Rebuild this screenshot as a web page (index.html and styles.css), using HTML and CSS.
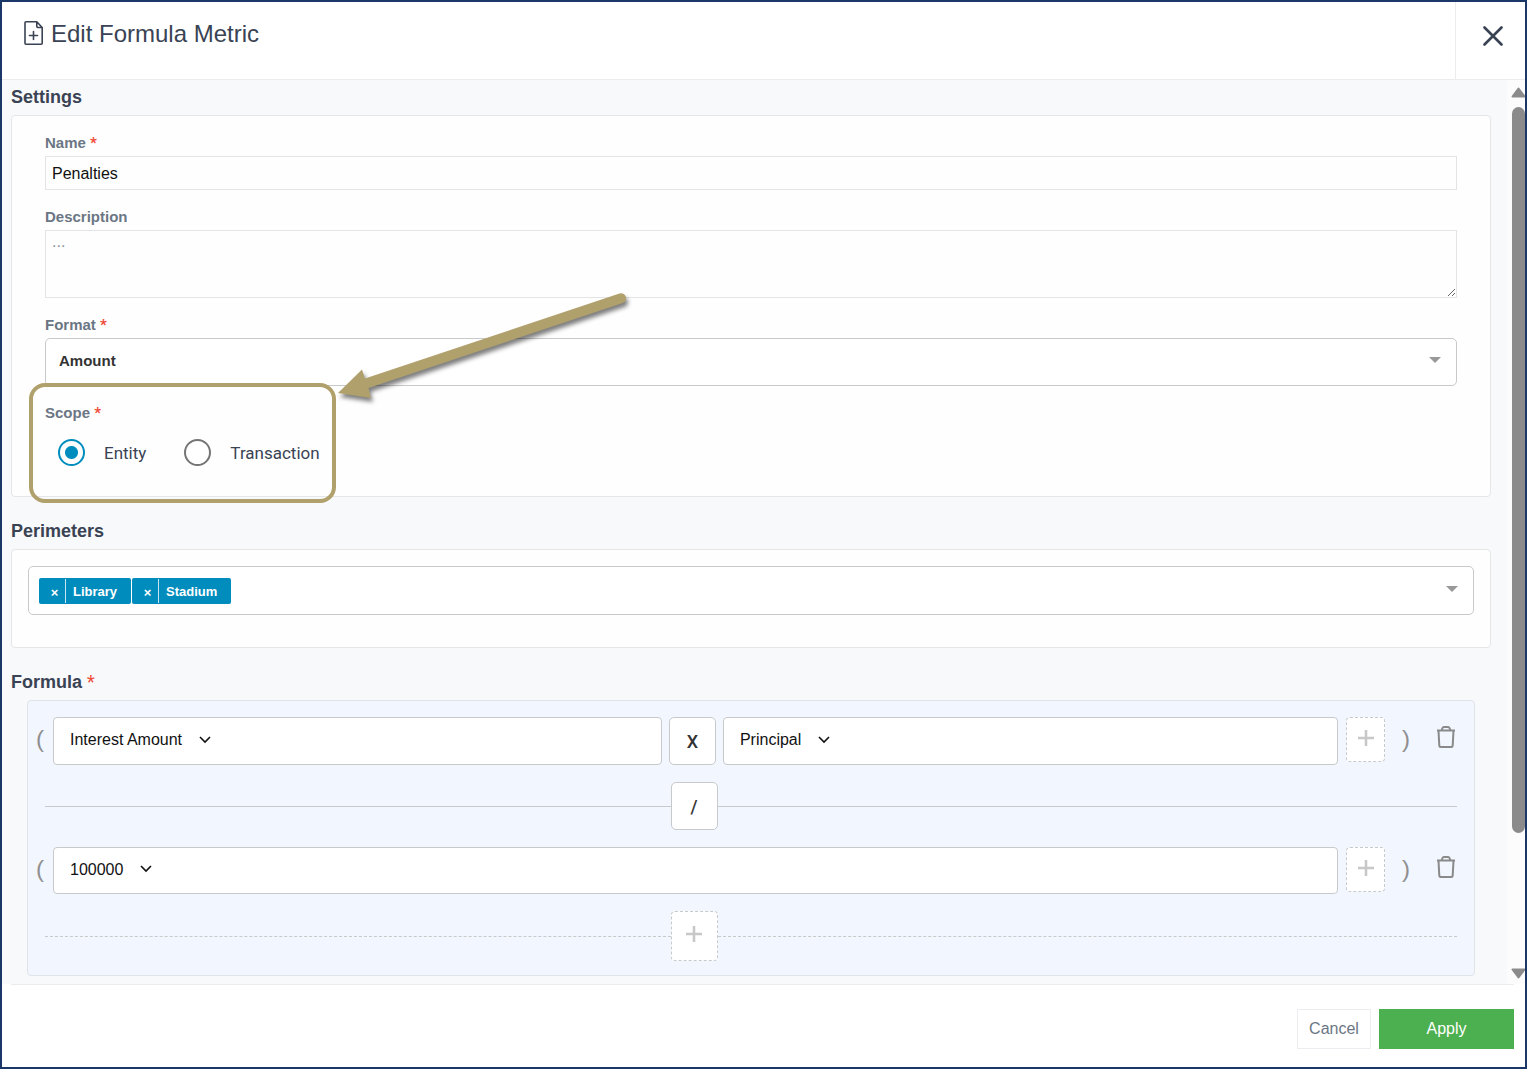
FILE: index.html
```
<!DOCTYPE html>
<html lang="en">
<head>
    <meta charset="UTF-8">
    <meta name="viewport" content="width=device-width, initial-scale=1">
    <title>Edit Formula Metric</title>
    <link rel="stylesheet" href="styles.css">
</head>
<body>
    <svg class="sprite" aria-hidden="true">
        <symbol id="icon-chevron" viewBox="0 0 12 8">
            <path d="M1 1l5 5 5-5" fill="none" stroke="currentColor" stroke-width="1.6"/>
        </symbol>
        <symbol id="icon-caret" viewBox="0 0 12 6">
            <path d="M0 0h12L6 6z" fill="currentColor"/>
        </symbol>
        <symbol id="icon-plus" viewBox="0 0 18 18">
            <path d="M9 1v16M1 9h16" fill="none" stroke="currentColor" stroke-width="2.6"/>
        </symbol>
        <symbol id="icon-trash" viewBox="0 0 20 22">
            <path d="M1 4.5h18M2.500 4.500l.8 15.200q.1 1.300 1.300 1.300h10.800q1.200 0 1.300-1.300L17.500 4.500M5.500 4.500l1-2.500q.4-1 1.400-1h4.200q1 0 1.400 1l1 2.500" fill="none" stroke="currentColor" stroke-width="2" stroke-linejoin="round"/>
        </symbol>
        <symbol id="icon-scroll" viewBox="0 0 15 11">
            <path d="M7.500 1.500L13.500 9.500H1.500z" fill="currentColor" stroke="currentColor" stroke-width="2" stroke-linejoin="round"/>
        </symbol>
    </svg>

    <div class="dialog" role="dialog" aria-labelledby="dialogTitle">
        <div class="header">
            <svg class="file-icon" viewBox="0 0 20 24" aria-hidden="true">
                <path d="M2 .8h10.800L18.200 6.500v15.700q0 1-1 1H2q-1 0-1-1V1.800q0-1 1-1zM12.800 1v4.500q0 1 1 1h4.400M9.500 10.500v8M5.500 14.500h8" fill="none" stroke="currentColor" stroke-width="1.600" stroke-linecap="round" stroke-linejoin="round"/>
            </svg>
            <h1 id="dialogTitle">Edit Formula Metric</h1>
            <button type="button" class="close" aria-label="Close">
                <svg viewBox="0 0 20 20"><path d="M1.500 1.500l17 17M18.500 1.500l-17 17" fill="none" stroke="currentColor" stroke-width="2.600" stroke-linecap="round"/></svg>
            </button>
        </div>

        <div class="body">
            <form class="content" id="metricForm">
                <h2>Settings</h2>
                <div class="card settings">
                    <div class="field">
                        <label for="name">Name <span class="required">*</span></label>
                        <input type="text" id="name" class="text" value="Penalties">
                    </div>
                    <div class="field">
                        <label for="description">Description</label>
                        <textarea id="description" class="text" placeholder="..."></textarea>
                    </div>
                    <div class="field">
                        <label for="format">Format <span class="required">*</span></label>
                        <div class="select-box">
                            <select id="format">
                                <option>Amount</option>
                            </select>
                            <svg class="caret"><use href="#icon-caret"/></svg>
                        </div>
                    </div>
                    <div class="field scope">
                        <fieldset>
                            <legend>Scope <span class="required">*</span></legend>
                            <div class="radios">
                                <label class="radio"><input type="radio" name="scope" checked>Entity</label>
                                <label class="radio"><input type="radio" name="scope">Transaction</label>
                            </div>
                        </fieldset>
                        <div class="highlight"></div>
                        <svg class="pointer" viewBox="330 285 310 125" aria-hidden="true">
                            <path d="M338 393L362 369.500L365 378.500L619.500 293.500A5 5 0 0 1 622.700 303L368.500 388L371 398z" fill="#b0a06b"/>
                        </svg>
                    </div>
                </div>

                <h2>Perimeters</h2>
                <div class="card perimeters">
                    <div class="tag-box">
                        <span class="tag"><button type="button" aria-label="Remove Library">×</button><span>Library</span></span>
                        <span class="tag"><button type="button" aria-label="Remove Stadium">×</button><span>Stadium</span></span>
                        <input type="text" class="tag-input" aria-label="Perimeters">
                        <svg class="caret"><use href="#icon-caret"/></svg>
                    </div>
                </div>

                <h2>Formula <span class="required">*</span></h2>
                <div class="formula">
                    <div class="row">
                        <span class="paren">(</span>
                        <div class="terms product">
                            <div class="term">
                                <select aria-label="First term"><option>Interest Amount</option></select>
                                <svg class="chevron"><use href="#icon-chevron"/></svg>
                            </div>
                            <button type="button" class="operator">X</button>
                            <div class="term">
                                <select aria-label="Second term"><option>Principal</option></select>
                                <svg class="chevron"><use href="#icon-chevron"/></svg>
                            </div>
                        </div>
                        <button type="button" class="add" aria-label="Add term"><svg><use href="#icon-plus"/></svg></button>
                        <span class="paren close-paren">)</span>
                        <button type="button" class="trash" aria-label="Delete row"><svg><use href="#icon-trash"/></svg></button>
                    </div>
                    <div class="divider">
                        <button type="button" class="operator">/</button>
                    </div>
                    <div class="row">
                        <span class="paren">(</span>
                        <div class="terms">
                            <div class="term">
                                <select aria-label="Divisor"><option>100000</option></select>
                                <svg class="chevron"><use href="#icon-chevron"/></svg>
                            </div>
                        </div>
                        <button type="button" class="add" aria-label="Add term"><svg><use href="#icon-plus"/></svg></button>
                        <span class="paren close-paren">)</span>
                        <button type="button" class="trash" aria-label="Delete row"><svg><use href="#icon-trash"/></svg></button>
                    </div>
                    <div class="divider dashed">
                        <button type="button" class="add" aria-label="Add row"><svg><use href="#icon-plus"/></svg></button>
                    </div>
                </div>
            </form>
            <div class="scrollbar" aria-hidden="true">
                <svg><use href="#icon-scroll"/></svg>
                <div class="track"><div class="thumb"></div></div>
                <svg class="down"><use href="#icon-scroll"/></svg>
            </div>
        </div>

        <div class="footer">
            <button type="button" class="cancel">Cancel</button>
            <button type="submit" form="metricForm" class="apply">Apply</button>
        </div>
    </div>
</body>
</html>
```
FILE: styles.css
```
* {
    box-sizing: border-box;
}
body {
    margin: 0;
    font-family: "Liberation Sans", Arial, sans-serif;
    font-size: 16px;
    color: #3a4354;
}
button, input, select, textarea {
    font: inherit;
    color: inherit;
    margin: 0;
}
button {
    padding: 0;
    cursor: pointer;
}
svg {
    display: block;
    flex: none;
}
.sprite {
    display: none;
}
.dialog {
    display: flex;
    flex-direction: column;
    min-height: 100vh;
    border: 2px solid #1b3768;
    background: #fff;
}

/* header */
.header {
    display: flex;
    height: 78px;
    padding-left: 22px;
    border-bottom: 1px solid #ebecee;
}
.file-icon {
    width: 20px;
    height: 24px;
    margin: 19px 7px 0 0;
}
h1 {
    flex: 1;
    margin: 0;
    font-size: 24px;
    line-height: 64px;
    font-weight: normal;
}
.close {
    display: flex;
    justify-content: center;
    width: 70px;
    padding: 24px 0 0 4px;
    border: none;
    border-left: 1px solid #ebecee;
    background: none;
}
.close svg {
    width: 20px;
    height: 20px;
}

/* body */
.body {
    display: flex;
    flex: 1;
    background: #f8f9fb;
}
.content {
    flex: 1;
    min-width: 0;
    padding: 0 16px 8px 9px;
}
h2 {
    margin: 0;
    font-size: 18px;
    line-height: 35px;
}
.required {
    font-family: Roboto, sans-serif;
    line-height: 1;
    color: #f04b37;
}
h2 .required {
    font-weight: normal;
}
.card {
    margin-bottom: 17px;
    border: 1px solid #e4e6e8;
    border-radius: 4px;
    background: #fefefe;
}
.settings {
    padding: 14px 33px 30px;
}
.field {
    display: flex;
    flex-direction: column;
    margin-bottom: 14px;
}
.field > label, legend {
    padding: 0;
    font-size: 15px;
    line-height: 26px;
    font-weight: bold;
    color: #6b7684;
}
.text {
    width: 100%;
    height: 34px;
    padding: 2px 6px 0;
    border: 1px solid #e2e4e6;
    background: #fefefe;
    color: #111;
    outline: none;
}
textarea.text {
    height: 68px;
    padding: 2px 6px;
}
textarea::placeholder {
    color: #8a94a0;
}
.select-box, .tag-box {
    display: flex;
    align-items: center;
    height: 48px;
    border: 1px solid #c8c9cb;
    border-radius: 5px;
    background: #fff;
}
.select-box {
    position: relative;
}
select {
    appearance: none;
    border: none;
    background: none;
    outline: none;
}
.select-box select {
    width: 100%;
    height: 100%;
    padding: 0 40px 4px 13px;
    font-size: 15px;
    font-weight: bold;
    color: #333;
}
.caret {
    width: 12px;
    height: 6px;
    margin: 0 15px 4px 0;
    color: #999;
}
.select-box .caret {
    position: absolute;
    right: 0;
    pointer-events: none;
}
.scope {
    position: relative;
    margin: 0;
}
fieldset {
    min-width: 0;
    margin: 0;
    padding: 0;
    border: none;
}
.radios {
    display: flex;
    gap: 38px;
    padding: 13px 13px 0;
}
.radio {
    display: flex;
    align-items: center;
    gap: 19px;
    font-family: Roboto, sans-serif;
    font-size: 17px;
}
.radio input {
    appearance: none;
    width: 27px;
    height: 27px;
    border: 2px solid #757575;
    border-radius: 50%;
    background: #fff;
}
.radio input:checked {
    border-color: #008dbd;
    background: radial-gradient(circle, #008dbd 6px, #fff 7px);
}
.highlight {
    position: absolute;
    top: -17px;
    left: -16px;
    width: 307px;
    height: 120px;
    border: 4px solid #b0a06b;
    border-radius: 16px;
    pointer-events: none;
}
.pointer {
    position: absolute;
    top: -115px;
    left: 285px;
    width: 310px;
    height: 125px;
    filter: drop-shadow(2px 4px 2px rgba(0, 0, 0, 0.5));
    pointer-events: none;
}

/* perimeters */
.perimeters {
    padding: 16px 16px 32px;
}
.tag-box {
    gap: 1px;
    height: 49px;
    padding-left: 10px;
}
.tag {
    display: flex;
    align-items: center;
    height: 26px;
    border-radius: 2px;
    background: #008dbd;
    color: #fff;
    font-size: 13px;
    line-height: 24px;
    font-weight: bold;
}
.tag button {
    width: 27px;
    height: 24px;
    padding: 2px 0 0 5px;
    border: none;
    border-right: 1px solid #c5e6f2;
    background: none;
}
.tag span {
    padding: 2px 14px 0 7px;
}
.tag-input {
    flex: 1;
    border: none;
    background: none;
    outline: none;
}

/* formula */
.formula {
    display: flex;
    flex-direction: column;
    gap: 17px;
    margin: 0 16px;
    padding: 16px 8px 14px;
    border: 1px solid #e0e3e7;
    border-radius: 4px;
    background: #f1f6ff;
}
.row {
    display: flex;
    align-items: flex-start;
}
.paren {
    width: 17px;
    font-size: 24px;
    line-height: 44px;
    color: #8f8f8f;
}
.terms {
    display: grid;
    flex: 1;
    gap: 7px;
    margin-right: 8px;
}
.product {
    grid-template-columns: 99fr 47px 100fr;
}
.term {
    display: flex;
    align-items: center;
    gap: 16px;
    height: 47px;
    padding: 0 16px 3px;
    border: 1px solid #c8c9cb;
    border-radius: 4px;
    background: #fff;
    color: #111;
}
.product .term {
    height: 48px;
}
.term select {
    padding: 0;
}
.chevron {
    width: 12px;
    height: 8px;
}
.operator {
    width: 47px;
    height: 48px;
    border: 1px solid #c8c9cb;
    border-radius: 5px;
    background: #fff;
    color: #333;
    font-family: Roboto, sans-serif;
    font-size: 18px;
    font-weight: 500;
}
.add {
    display: flex;
    align-items: center;
    justify-content: center;
    width: 39px;
    height: 45px;
    padding-bottom: 4px;
    border: 1px dashed #c8c9cb;
    border-radius: 4px;
    background: #fff;
    color: #c8c8c8;
}
.add svg {
    width: 18px;
    height: 18px;
}
.close-paren {
    width: 51px;
    padding-left: 17px;
}
.trash {
    width: 20px;
    height: 40px;
    margin-right: 10px;
    border: none;
    background: none;
    color: #8a8a8a;
}
.trash svg {
    width: 20px;
    height: 22px;
}
.divider {
    display: flex;
    align-items: center;
    margin: 0 9px;
}
.divider::before, .divider::after {
    content: "";
    flex: 11;
    border-top: 1px solid #c8c9cb;
}
.divider::after {
    flex: 13;
}
.dashed::before, .dashed::after {
    border-top-style: dashed;
}
.dashed .add {
    width: 47px;
    height: 50px;
}

/* scrollbar */
.scrollbar {
    display: flex;
    flex-direction: column;
    width: 18px;
    padding: 7px 0 5px 4px;
    overflow: hidden;
    background: #fcfcfc;
    color: #8b8b8b;
}
.scrollbar svg {
    width: 15px;
    height: 11px;
}
.scrollbar .down {
    transform: rotate(180deg);
}
.track {
    flex: 1;
    margin: 9px 0 7px 1px;
}
.thumb {
    width: 13px;
    height: 85%;
    border-radius: 7px;
    background: #8b8b8b;
}

/* footer */
.footer {
    display: flex;
    justify-content: flex-end;
    gap: 8px;
    margin: 0 11px 0 9px;
    padding: 24px 0 18px;
    border-top: 1px solid #ebecee;
}
.footer button {
    height: 40px;
}
.cancel {
    width: 74px;
    border: 1px solid #ebedf0;
    background: #fff;
    color: #6b7684;
}
.apply {
    width: 135px;
    border: none;
    background: #4caf50;
    color: #fff;
}
```
